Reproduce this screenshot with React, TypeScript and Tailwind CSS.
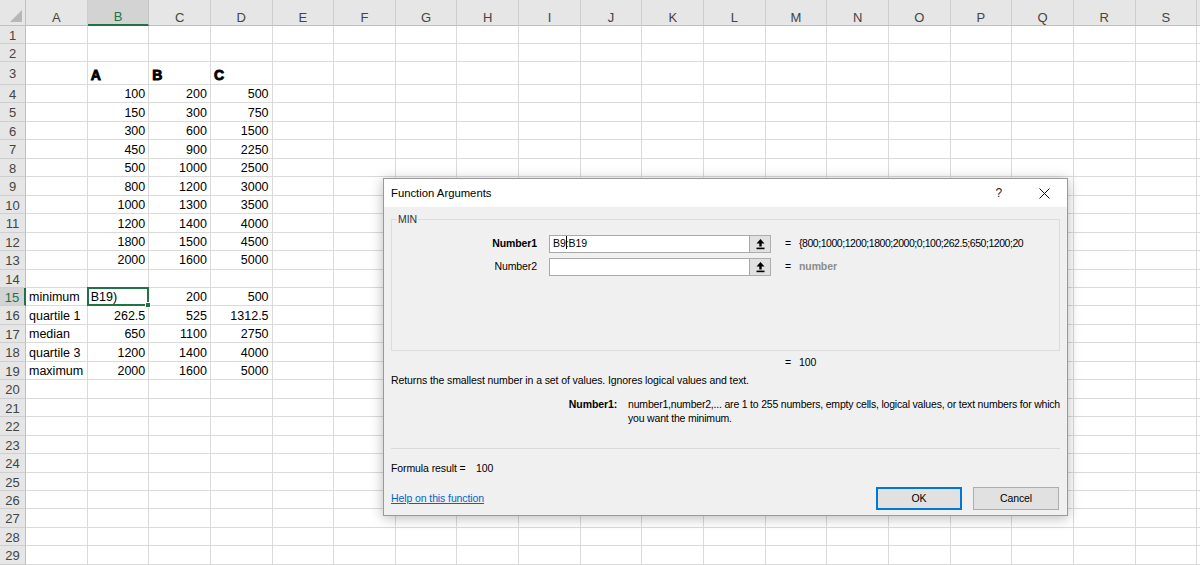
import React from 'react';

const COLS = ['A', 'B', 'C', 'D', 'E', 'F', 'G', 'H', 'I', 'J', 'K', 'L', 'M', 'N', 'O', 'P', 'Q', 'R', 'S', 'T'];

// cell values keyed by row number, then column letter
const DATA: Record<number, Record<string, string>> = {
    4: { B: '100', C: '200', D: '500' },
    5: { B: '150', C: '300', D: '750' },
    6: { B: '300', C: '600', D: '1500' },
    7: { B: '450', C: '900', D: '2250' },
    8: { B: '500', C: '1000', D: '2500' },
    9: { B: '800', C: '1200', D: '3000' },
    10: { B: '1000', C: '1300', D: '3500' },
    11: { B: '1200', C: '1400', D: '4000' },
    12: { B: '1800', C: '1500', D: '4500' },
    13: { B: '2000', C: '1600', D: '5000' },
    15: { A: 'minimum', C: '200', D: '500' },
    16: { A: 'quartile 1', B: '262.5', C: '525', D: '1312.5' },
    17: { A: 'median', B: '650', C: '1100', D: '2750' },
    18: { A: 'quartile 3', B: '1200', C: '1400', D: '4000' },
    19: { A: 'maximum', B: '2000', C: '1600', D: '5000' },
};

const HEADINGS: Record<string, string> = { B: 'A', C: 'B', D: 'C' };

const ROWS = Array.from({ length: 29 }, (_, i) => i + 1);

const RefIcon: React.FC = () => (
    <svg width="9" height="11" viewBox="0 0 9 11">
        <polygon points="4.5,0 8.5,4.5 5.7,4.5 5.7,7.5 3.3,7.5 3.3,4.5 0.5,4.5" fill="#000" />
        <rect x="0.5" y="8.6" width="8" height="1.6" fill="#000" />
    </svg>
);

const ArgRow: React.FC<{ label: string; bold?: boolean; value: React.ReactNode; result: React.ReactNode }> = ({ label, bold, value, result }) => (
    <div className="flex items-center h-[18px]">
        <div className={`w-[145px] text-right ${bold ? 'font-bold' : ''}`}>{label}</div>
        <div className="ml-[12px] w-[201px] h-[18px] bg-white border border-[#a9a9a9] flex items-center pl-[3px]">{value}</div>
        <div className="w-[21px] h-[18px] bg-[#e1e1e1] border border-[#adadad] border-l-0 flex items-center justify-center">
            <RefIcon />
        </div>
        <div className="ml-[14px] w-[14px]">=</div>
        <div className="whitespace-nowrap">{result}</div>
    </div>
);

const Cell: React.FC<{ row: number; col: string }> = ({ row, col }) => {
    if (row === 15 && col === 'B') {
        return (
            <div className="relative border-r border-b border-[#dadada] flex items-center pt-[2px] px-[3px]">
                B19)
                <div className="absolute -left-px -top-px -right-px -bottom-px border-2 border-[#217346]" />
                <div className="absolute -right-[3px] -bottom-[3px] w-[6px] h-[6px] bg-[#217346] border border-white" />
            </div>
        );
    }
    const heading = row === 3 ? HEADINGS[col] : undefined;
    const value = DATA[row]?.[col];
    const isText = heading !== undefined || (value !== undefined && isNaN(Number(value)));
    return (
        <div className={`border-r border-b border-[#dadada] flex items-center pt-[2px] px-[3px] whitespace-nowrap ${isText ? 'justify-start' : 'justify-end'}`}>
            {heading && (
                <span className="font-bold text-[14px] leading-none mt-[1px] text-black [-webkit-text-stroke:0.9px_black]">{heading}</span>
            )}
            {value}
        </div>
    );
};

const FunctionArgumentsDialog: React.FC = () => (
    <div className="absolute left-[383px] top-[178px] w-[685px] h-[338px] bg-[#f0f0f0] border border-[#9a9a9a] shadow-[0_2px_12px_rgba(0,0,0,0.28)] flex flex-col text-[10.5px] tracking-[-0.1px] text-black font-['Liberation_Sans',Arial,sans-serif]">
        <div className="h-[28px] bg-white flex items-center pl-[7px] shrink-0">
            <span className="text-[11.3px] tracking-normal">Function Arguments</span>
            <span className="ml-auto mr-[37px] text-[12px] text-[#222]">?</span>
            <svg width="11" height="11" viewBox="0 0 11 11" className="mr-[17px]">
                <path d="M0.5 0.5 L10.5 10.5 M10.5 0.5 L0.5 10.5" stroke="#111" strokeWidth="1" />
            </svg>
        </div>

        <div className="flex-1 flex flex-col px-[7px]">
            {/* argument group */}
            <div className="relative mt-[12px] h-[132px] border border-[#dcdcdc] flex flex-col gap-[5px] pt-[15px]">
                <span className="absolute -top-[8px] left-[5px] px-[1px] bg-[#f0f0f0] text-[#333]">MIN</span>
                <ArgRow
                    label="Number1"
                    bold
                    value={
                        <span className="flex items-center">
                            B9<span className="relative">:<span className="absolute left-[0px] top-[0px] w-px h-[13px] bg-black" /></span>B19
                        </span>
                    }
                    result={<span className="tracking-[-0.45px]">{'{800;1000;1200;1800;2000;0;100;262.5;650;1200;20'}</span>}
                />
                <ArgRow label="Number2" value="" result={<span className="text-[#8c8c8c] font-bold">number</span>} />
            </div>

            <div className="flex mt-[4px] h-[16px] items-center pl-[394px]">
                <span className="w-[14px]">=</span>
                <span>100</span>
            </div>

            <div className="mt-[2px] h-[16px] flex items-center whitespace-nowrap">
                Returns the smallest number in a set of values. Ignores logical values and text.
            </div>

            <div className="mt-[8px] flex leading-[14px]">
                <div className="w-[234px] text-right font-bold">Number1:</div>
                <div className="ml-[11px] w-[436px] whitespace-nowrap tracking-[-0.2px]">
                    <div>number1,number2,... are 1 to 255 numbers, empty cells, logical values, or text numbers for which</div>
                    <div>you want the minimum.</div>
                </div>
            </div>

            <div className="mt-[23px] h-px bg-[#d9d9d9]" />

            <div className="mt-[12px] flex items-center h-[16px]">
                <span className="w-[85px]">Formula result =</span>
                <span>100</span>
            </div>

            <div className="mt-[10px] flex items-center">
                <span className="text-[#0066cc] underline">Help on this function</span>
                <button className="ml-auto w-[86px] h-[23px] bg-[#e1e1e1] border-2 border-[#0078d7] flex items-center justify-center">OK</button>
                <button className="ml-[11px] mr-[1px] w-[86px] h-[23px] bg-[#e1e1e1] border border-[#adadad] flex items-center justify-center">Cancel</button>
            </div>
        </div>
    </div>
);

const App: React.FC = () => {
    return (
        <div className="relative w-[1200px] h-[565px] overflow-hidden bg-white font-['Liberation_Sans',Arial,sans-serif] text-[12.5px] text-black">
            <div className="grid grid-cols-[26px_repeat(20,61.65px)] grid-rows-[26px_18px_18px_23px_repeat(26,18.46px)]">
                {/* corner */}
                <div className="bg-[#e6e6e6] border-r border-b border-[#bfbfbf] flex items-end justify-end pr-[3px] pb-[3px]">
                    <svg width="12" height="12" viewBox="0 0 12 12">
                        <polygon points="0,12 12,12 12,0" fill="#b7b7b7" />
                    </svg>
                </div>
                {COLS.map(c => (
                    <div
                        key={c}
                        className={`flex items-center justify-center pt-[10px] text-[13px] ${c === 'B' ? 'bg-[#d3d3d3] text-[#217346] border-b-2 border-b-[#217346] border-r border-r-[#c4c4c4]' : 'bg-[#e6e6e6] text-[#444] border-r border-r-[#cdcdcd] border-b border-b-[#bfbfbf]'}`}
                    >
                        {c === 'T' ? '' : c}
                    </div>
                ))}

                {ROWS.map(r => (
                    <React.Fragment key={r}>
                        <div
                            className={`flex items-center justify-center pt-[2px] text-[13px] border-b border-b-[#cfcfcf] ${r === 15 ? 'bg-[#d3d3d3] text-[#217346] border-r-2 border-r-[#217346]' : 'bg-[#e6e6e6] text-[#444] border-r border-r-[#bfbfbf]'}`}
                        >
                            {r}
                        </div>
                        {COLS.map(c => <Cell key={c} row={r} col={c} />)}
                    </React.Fragment>
                ))}
            </div>

            <FunctionArgumentsDialog />
        </div>
    );
};

export default App;
